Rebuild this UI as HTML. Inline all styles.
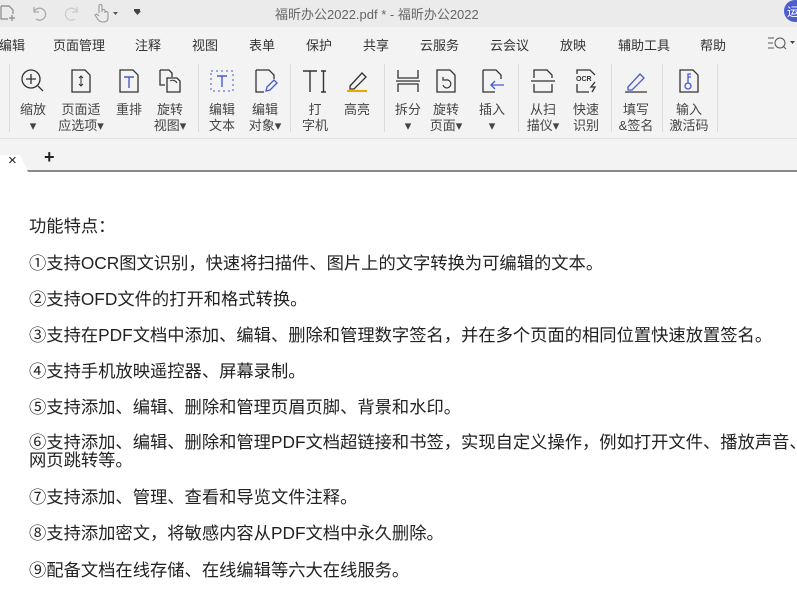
<!DOCTYPE html>
<html><head><meta charset="utf-8"><style>
*{margin:0;padding:0;box-sizing:border-box}
body{width:797px;height:589px;overflow:hidden;background:#fff;font-family:"Liberation Sans","Noto Sans CJK SC",sans-serif;color:#333;position:relative}
.abs{position:absolute}
#title{left:0;top:0;width:797px;height:27px;background:#ebebeb}
#menu{left:0;top:27px;width:797px;height:31px;background:#f3f3f3;font-size:13px;color:#333}
#menu span{position:absolute;top:8px}
#tool{left:0;top:58px;width:797px;height:81px;background:#f3f3f3;border-bottom:1px solid #e2e2e2}
.sep{position:absolute;top:6px;width:1px;height:68px;background:#dcdcdc}
.it{position:absolute;top:0;width:60px;margin-left:-30px;text-align:center;font-size:13px;line-height:16px;color:#444}
.it svg{display:block;margin:10px auto 8px;width:26px;height:26px}
#tabs{left:0;top:139px;width:797px;height:33px;background:#f3f3f3;border-bottom:2px solid #8a8a8a}
.doc{left:29px;font-size:17.3px;color:#222;white-space:nowrap}
</style></head><body>
<div id="title" class="abs">
<svg class="abs" style="left:0;top:4px" width="16" height="18"><path d="M1 2h8l4 4v4M1 2v13h7M12 11v6M9 14h6" stroke="#888" fill="none" stroke-width="1.2"/></svg>
<svg class="abs" style="left:30px;top:4px" width="18" height="18"><path d="M4 3v5h5M4 8a6 6 0 1 1 2 7" stroke="#aaa" fill="none" stroke-width="1.3"/></svg>
<svg class="abs" style="left:63px;top:4px" width="18" height="18"><path d="M14 3v5h-5M14 8a6 6 0 1 0-2 7" stroke="#ccc" fill="none" stroke-width="1.3"/></svg>
<svg class="abs" style="left:93px;top:3px" width="28" height="20"><path d="M6 10V3a1.5 1.5 0 0 1 3 0v6V8a1.5 1.5 0 0 1 3 0v2a1.5 1.5 0 0 1 3 0v5c0 3-2 4-5 4s-5-2-6-4l-2-3 2-1 2 2" stroke="#999" fill="none" stroke-width="1.1"/><path d="M20 9h5l-2.5 3z" fill="#555"/></svg>
<div class="abs" style="left:134px;top:9px;width:6px;height:1.5px;background:#444"></div>
<svg class="abs" style="left:134px;top:11px" width="7" height="5"><path d="M0 0h7l-3.5 4z" fill="#444"/></svg>
<div class="abs" style="left:275px;top:4px;font-size:13px;color:#666">福昕办公2022.pdf * - 福昕办公2022</div>
<div class="abs" style="left:784px;top:0;width:22px;height:22px;border-radius:50%;background:#4e5ccf;color:#fff;font-size:12px;padding:3px 0 0 3px">运</div>
</div>
<div id="menu" class="abs">
<span style="left:-1px">编辑</span><span style="left:53px">页面管理</span><span style="left:135px">注释</span><span style="left:192px">视图</span><span style="left:249px">表单</span><span style="left:306px">保护</span><span style="left:363px">共享</span><span style="left:420px">云服务</span><span style="left:490px">云会议</span><span style="left:560px">放映</span><span style="left:618px">辅助工具</span><span style="left:700px">帮助</span>
<svg class="abs" style="left:767px;top:8px" width="30" height="16"><path d="M1 3h6M1 8h5M1 13h6" stroke="#555"/><circle cx="13" cy="8" r="5" stroke="#555" fill="none"/><path d="M16 11l3 3" stroke="#555"/><path d="M23 6h5l-2.5 3z" fill="#444"/></svg>
</div>
<div id="tool" class="abs">
<div class="sep" style="left:9px"></div><div class="sep" style="left:198px"></div><div class="sep" style="left:290px"></div><div class="sep" style="left:384px"></div><div class="sep" style="left:518px"></div><div class="sep" style="left:611px"></div><div class="sep" style="left:662px"></div><div class="sep" style="left:717px"></div>
<div class="it" style="left:33px"><svg viewBox="0 0 26 26"><circle cx="11" cy="11" r="9" stroke="#333" fill="none" stroke-width="1.3"/><path d="M11 6v10M6 11h10M18 18l5 5" stroke="#333" stroke-width="1.3"/></svg>缩放<br>▾</div>
<div class="it" style="left:81px"><svg viewBox="0 0 26 26"><path d="M4 2h13l5 5v17H4z" stroke="#333" fill="none" stroke-width="1.3"/><path d="M13 8v10M11 10l2-2 2 2M11 16l2 2 2-2" stroke="#333" fill="none"/></svg>页面适<br>应选项▾</div>
<div class="it" style="left:129px"><svg viewBox="0 0 26 26"><path d="M4 2h13l5 5v17H4z" stroke="#333" fill="none" stroke-width="1.3"/><path d="M8 9h10M13 9v11" stroke="#4a5ad0" stroke-width="1.4"/></svg>重排</div>
<div class="it" style="left:170px"><svg viewBox="0 0 26 26"><path d="M3 2h9l3 3v4M3 2v15h5" stroke="#333" fill="none" stroke-width="1.3"/><path d="M10 10h10l3 3v11H10z" stroke="#333" fill="none" stroke-width="1.3"/><path d="M13 13a5 5 0 0 1 7 2" stroke="#333" fill="none"/></svg>旋转<br>视图▾</div>
<div class="it" style="left:222px"><svg viewBox="0 0 26 26"><rect x="2" y="3" width="22" height="20" stroke="#4a5ad0" fill="none" stroke-dasharray="2 3"/><path d="M8 8h10M13 8v11" stroke="#4a5ad0" stroke-width="1.4"/></svg>编辑<br>文本</div>
<div class="it" style="left:265px"><svg viewBox="0 0 26 26"><path d="M4 2h13l5 5v4M4 2v22h8" stroke="#333" fill="none" stroke-width="1.3"/><path d="M14 23l1-4 7-7 3 3-7 7z" stroke="#4a5ad0" fill="none" stroke-width="1.3"/></svg>编辑<br>对象▾</div>
<div class="it" style="left:315px"><svg viewBox="0 0 26 26"><path d="M1 3h14M8 3v21M19 3h5M21.5 3v21M19 24h5" stroke="#333" stroke-width="1.4" fill="none"/></svg>打<br>字机</div>
<div class="it" style="left:357px"><svg viewBox="0 0 26 26"><path d="M6 18l12-13 4 4-12 12H6z" stroke="#333" fill="none" stroke-width="1.3"/><path d="M3 23h20" stroke="#f0a800" stroke-width="2"/></svg>高亮</div>
<div class="it" style="left:408px"><svg viewBox="0 0 26 26"><path d="M3 2v8h20V2M3 24v-8h20v8M1 13h24" stroke="#333" fill="none" stroke-width="1.3"/></svg>拆分<br>▾</div>
<div class="it" style="left:446px"><svg viewBox="0 0 26 26"><path d="M4 2h13l5 5v17H4z" stroke="#333" fill="none" stroke-width="1.3"/><path d="M10 17a4 4 0 1 0 3-5h-3v-3" stroke="#333" fill="none" stroke-width="1.2"/></svg>旋转<br>页面▾</div>
<div class="it" style="left:492px"><svg viewBox="0 0 26 26"><path d="M4 2h13l5 5v4M4 2v22h12" stroke="#333" fill="none" stroke-width="1.3"/><path d="M12 17h13M16 13l-4 4 4 4" stroke="#4a5ad0" fill="none" stroke-width="1.3"/></svg>插入<br>▾</div>
<div class="it" style="left:543px"><svg viewBox="0 0 26 26"><path d="M4 10V2h13l5 5v3M4 16v8h18v-8M1 13h24" stroke="#333" fill="none" stroke-width="1.3"/></svg>从扫<br>描仪▾</div>
<div class="it" style="left:586px"><svg viewBox="0 0 26 26"><path d="M4 6V2h13l5 5M4 16v8h12" stroke="#333" fill="none" stroke-width="1.3"/><text x="3" y="13" font-size="7" font-weight="bold" fill="#333" font-family="Liberation Sans">OCR</text><path d="M22 14l-4 5h4l-3 5" stroke="#333" fill="none" stroke-width="1.3"/></svg>快速<br>识别</div>
<div class="it" style="left:636px"><svg viewBox="0 0 26 26"><path d="M5 19l12-13 4 4-12 12H5z" stroke="#4a5ad0" fill="none" stroke-width="1.3"/><path d="M2 24h22" stroke="#333" stroke-width="1.3"/></svg>填写<br>&amp;签名</div>
<div class="it" style="left:689px"><svg viewBox="0 0 26 26"><path d="M4 2h13l5 5v17H4z" stroke="#333" fill="none" stroke-width="1.3"/><circle cx="12" cy="18" r="3" stroke="#4a5ad0" fill="none" stroke-width="1.3"/><path d="M12 15V6h3M12 9h3" stroke="#4a5ad0" fill="none" stroke-width="1.3"/></svg>输入<br>激活码</div>
</div>
<div id="tabs" class="abs">
<svg class="abs" style="left:0;top:16px" width="32" height="17"><path d="M0 0h20l8 17H0z" fill="#fff"/></svg>
<div class="abs" style="left:8px;top:13px;font-size:15px;color:#222">×</div>
<div class="abs" style="left:44px;top:8px;font-size:18px;color:#222;font-weight:bold">+</div>
</div>
<div class="abs doc" style="top:212px">功能特点：</div>
<div class="abs doc" style="top:249px">①支持OCR图文识别，快速将扫描件、图片上的文字转换为可编辑的文本。</div>
<div class="abs doc" style="top:285px">②支持OFD文件的打开和格式转换。</div>
<div class="abs doc" style="top:321px">③支持在PDF文档中添加、编辑、删除和管理数字签名，并在多个页面的相同位置快速放置签名。</div>
<div class="abs doc" style="top:357px">④支持手机放映遥控器、屏幕录制。</div>
<div class="abs doc" style="top:393px">⑤支持添加、编辑、删除和管理页眉页脚、背景和水印。</div>
<div class="abs doc" style="top:433px;line-height:18px">⑥支持添加、编辑、删除和管理PDF文档超链接和书签，实现自定义操作，例如打开文件、播放声音、<br>网页跳转等。</div>
<div class="abs doc" style="top:483px">⑦支持添加、管理、查看和导览文件注释。</div>
<div class="abs doc" style="top:519px">⑧支持添加密文，将敏感内容从PDF文档中永久删除。</div>
<div class="abs doc" style="top:556px">⑨配备文档在线存储、在线编辑等六大在线服务。</div>
</body></html>
